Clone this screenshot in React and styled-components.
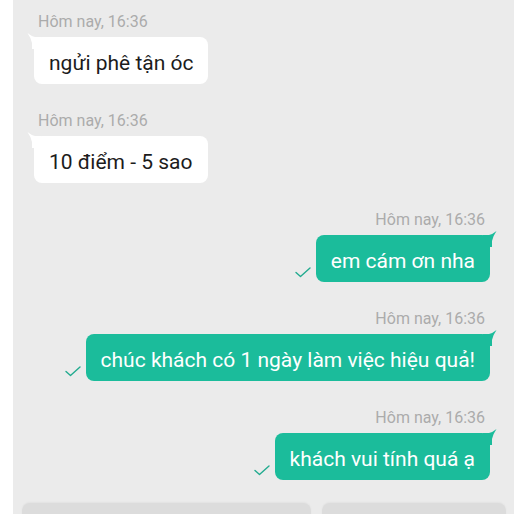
import React from "react";
import styled, { createGlobalStyle } from "styled-components";

const GlobalStyle = createGlobalStyle`
  html, body { margin: 0; padding: 0; background: #ffffff; }
  body { font-family: Roboto, "Noto Sans", "Liberation Sans", sans-serif; }
  * { box-sizing: border-box; }
`;

const Screen = styled.div`
  width: 514px;
  height: 514px;
  overflow: hidden;
  padding-left: 13px;
  background: #ffffff;
`;

const Panel = styled.div`
  height: 100%;
  background: #ebebeb;
  padding-top: 12px;
  display: flex;
  flex-direction: column;
`;

const Thread = styled.div`
  display: flex;
  flex-direction: column;
  gap: 27px;
  padding: 0 24px 0 21px;
`;

const Group = styled.div`
  display: flex;
  flex-direction: column;
  align-items: ${(p) => (p.$out ? "flex-end" : "flex-start")};
`;

const Stamp = styled.div`
  font-size: 16px;
  line-height: 20px;
  color: #ababab;
  margin: 0 ${(p) => (p.$out ? "5px" : "0")} 5px ${(p) => (p.$out ? "0" : "4px")};
`;

const BubbleRow = styled.div`
  display: flex;
  align-items: flex-end;
  gap: 5px;
`;

const Bubble = styled.div`
  position: relative;
  height: 47px;
  padding: 14px 15px 9px;
  font-size: 21px;
  line-height: 24px;
  white-space: nowrap;
  border-radius: 8px;
  background: ${(p) => (p.$out ? "#1bbc9b" : "#ffffff")};
  color: ${(p) => (p.$out ? "#ffffff" : "#1c1c1c")};
`;

const Tail = styled.svg`
  position: absolute;
  top: -4px;
  ${(p) => (p.$out ? "right: -7px;" : "left: -7px;")}
  width: 14px;
  height: 16px;
  ${(p) => (p.$out ? "" : "transform: scaleX(-1);")}
`;

const Check = styled.svg`
  width: 16px;
  height: 12px;
  margin-bottom: 4px;
  flex: none;
`;

const Dock = styled.div`
  margin-top: 23px;
  display: grid;
  grid-template-columns: 289px 1fr;
  gap: 11px;
  padding: 0 8px 0 9px;
`;

const DockCard = styled.div`
  height: 40px;
  background: #dcdcdc;
  border-radius: 8px;
  box-shadow: 0 -1px 2px rgba(0, 0, 0, 0.04);
`;

function TailShape({ out }) {
  return (
    <Tail $out={out} viewBox="0 0 14 16">
      <path
        d="M0 4 L6 4 Q10 3 13.5 0 Q10 5 9 10 L9 16 L0 16 Z"
        fill={out ? "#1bbc9b" : "#ffffff"}
      />
    </Tail>
  );
}

function CheckMark() {
  return (
    <Check viewBox="0 0 16 12">
      <path
        d="M1 6.5 L5.5 10.5 L15 2"
        fill="none"
        stroke="#22ab8f"
        strokeWidth="1.4"
        strokeLinecap="round"
        strokeLinejoin="round"
      />
    </Check>
  );
}

const messages = [
  { out: false, text: "ngửi phê tận óc" },
  { out: false, text: "10 điểm - 5 sao" },
  { out: true, text: "em cám ơn nha" },
  { out: true, text: "chúc khách có 1 ngày làm việc hiệu quả!" },
  { out: true, text: "khách vui tính quá ạ" },
];

export default function App() {
  return (
    <>
      <GlobalStyle />
      <Screen>
        <Panel>
          <Thread>
            {messages.map((m, i) => (
              <Group key={i} $out={m.out}>
                <Stamp $out={m.out}>Hôm nay, 16:36</Stamp>
                <BubbleRow>
                  {m.out && <CheckMark />}
                  <Bubble $out={m.out}>
                    <TailShape out={m.out} />
                    {m.text}
                  </Bubble>
                </BubbleRow>
              </Group>
            ))}
          </Thread>
          <Dock>
            <DockCard />
            <DockCard />
          </Dock>
        </Panel>
      </Screen>
    </>
  );
}
